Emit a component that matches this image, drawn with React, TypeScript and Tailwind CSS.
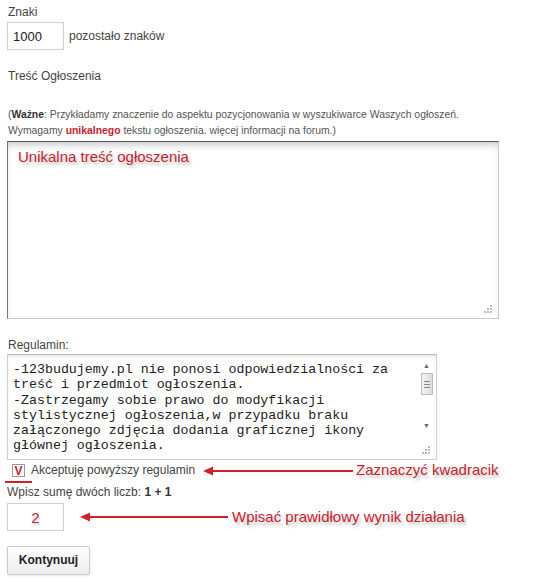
import React from "react";

const regulamin = `-123budujemy.pl nie ponosi odpowiedzialności za
treść i przedmiot ogłoszenia.
-Zastrzegamy sobie prawo do modyfikacji
stylistycznej ogłoszenia,w przypadku braku
załączonego zdjęcia dodania graficznej ikony
głównej ogłoszenia.`;

const Arrow = ({ width }: { width: number }) => (
  <svg width={width} height="12" viewBox={`0 0 ${width} 12`} className="shrink-0">
    <line x1="8" y1="6" x2={width} y2="6" stroke="#d0202a" strokeWidth="2" />
    <polygon points="0,6 10,1.5 10,10.5" fill="#d0202a" />
  </svg>
);

const Note = ({ children }: { children: React.ReactNode }) => (
  <span className="text-[15px] text-[#c8232c] [text-shadow:2px_3px_3px_rgba(0,0,0,0.25)]">{children}</span>
);

const Grip = () => (
  <div className="absolute right-[6px] bottom-[5px] grid grid-cols-3 gap-[1px]">
    <span />
    <span />
    <span className="w-[2px] h-[2px] bg-[#bbb]" />
    <span />
    <span className="w-[2px] h-[2px] bg-[#bbb]" />
    <span className="w-[2px] h-[2px] bg-[#bbb]" />
    <span className="w-[2px] h-[2px] bg-[#bbb]" />
    <span className="w-[2px] h-[2px] bg-[#bbb]" />
    <span className="w-[2px] h-[2px] bg-[#bbb]" />
  </div>
);

export default function App() {
  return (
    <div className="w-[547px] h-[582px] bg-white text-[#444] font-['Liberation_Sans',Arial,sans-serif] text-[12px] leading-[15px] overflow-hidden">
      <div className="pl-[7px] pt-[5px] flex flex-col">
        <div className="pl-px">Znaki</div>
        <div className="mt-[2px] flex items-center">
          <div className="w-[57px] h-[28px] border border-[#cfcfcf] flex items-center pl-[5px] text-[13px] text-[#222]">1000</div>
          <span className="ml-[5px] mt-[1px]">pozostało znaków</span>
        </div>
        <div className="mt-[19px] pl-px">Treść Ogłoszenia</div>
        <div className="mt-[23px] pl-px text-[10.4px] leading-[16px] text-[#555]">
          <div>
            (<b className="text-[#333]">Ważne</b>: Przykładamy znaczenie do aspektu pozycjonowania w wyszukiwarce Waszych ogłoszeń.
          </div>
          <div>
            Wymagamy <b className="text-[#c8232c]">unikalnego</b> tekstu ogłoszenia. więcej informacji na forum.)
          </div>
        </div>
        <div className="mt-[2px] relative w-[492px] h-[178px] border border-[#c8c8c8] border-t-[#555] border-l-[#777] shadow-[inset_0_6px_8px_-4px_rgba(0,0,0,0.25)] px-[10px] pt-[7px]">
          <Note>Unikalna treść ogłoszenia</Note>
          <Grip />
        </div>
        <div className="mt-[19px] pl-px">Regulamin:</div>
        <div className="mt-[1px] relative w-[430px] h-[106px] border border-[#cfcfcf] border-t-[#bbb] shadow-[inset_0_3px_4px_-2px_rgba(0,0,0,0.15)] flex">
          <pre className="flex-1 pl-[5px] pt-[7px] font-['Liberation_Mono','Courier_New',monospace] text-[13.3px] leading-[15.3px] text-[#222] whitespace-pre overflow-hidden">
            {regulamin}
          </pre>
          <div className="w-[17px] flex flex-col items-center pt-[6px] pr-[2px]">
            <span className="text-[7px] leading-[10px] text-[#666]">▲</span>
            <div className="mt-[2px] w-[12px] h-[22px] border border-[#bbb] bg-gradient-to-r from-[#f4f4f4] to-[#ddd] flex flex-col items-center justify-center gap-[2px]">
              <span className="w-[6px] h-px bg-[#888]" />
              <span className="w-[6px] h-px bg-[#888]" />
              <span className="w-[6px] h-px bg-[#888]" />
            </div>
            <span className="mt-[26px] text-[7px] leading-[10px] text-[#666]">▼</span>
          </div>
          <Grip />
        </div>
        <div className="mt-[2px] flex items-center h-[17px] relative">
          <div className="ml-[5px] w-[13px] h-[13px] border border-[#999] flex items-center justify-center text-[12px] leading-none text-[#d0202a] font-bold">V</div>
          <span className="absolute left-[-2px] top-[19px] w-[27px] h-[2px] bg-[#d0202a]" />
          <span className="ml-[6px] text-[12px]">Akceptuję powyższy regulamin</span>
          <span className="ml-[8px]">
            <Arrow width={150} />
          </span>
          <span className="ml-[3px]">
            <Note>Zaznaczyć kwadracik</Note>
          </span>
        </div>
        <div className="mt-[6px] text-[12px]">
          Wpisz sumę dwóch liczb: <b className="text-[#333]">1 + 1</b>
        </div>
        <div className="mt-[3px] flex items-center">
          <div className="w-[57px] h-[28px] border border-[#cfcfcf] flex items-center justify-center text-[15px] text-[#c8232c] [text-shadow:1px_2px_2px_rgba(0,0,0,0.2)]">2</div>
          <span className="ml-[16px]">
            <Arrow width={148} />
          </span>
          <span className="ml-[4px]">
            <Note>Wpisać prawidłowy wynik działania</Note>
          </span>
        </div>
        <div className="mt-[15px]">
          <button className="w-[83px] h-[29px] border border-[#ccc] rounded-[2px] bg-gradient-to-b from-white to-[#ececec] shadow-[0_1px_2px_rgba(0,0,0,0.1)] text-[12px] font-bold text-[#222]">
            Kontynuuj
          </button>
        </div>
      </div>
    </div>
  );
}
